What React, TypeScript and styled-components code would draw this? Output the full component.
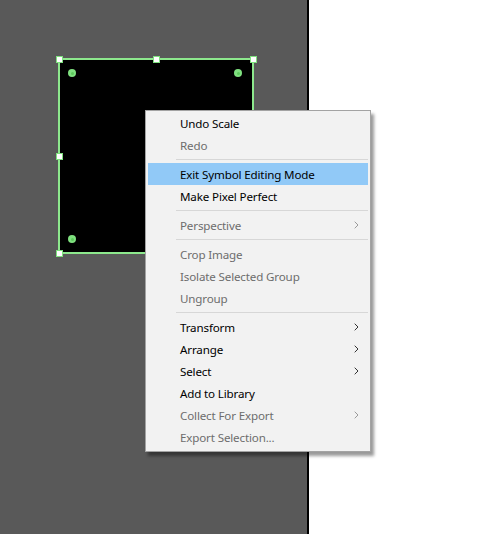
import React from "react";
import styled, { createGlobalStyle } from "styled-components";

const Global = createGlobalStyle`
  html, body { margin: 0; padding: 0; }
  body { width: 504px; height: 534px; overflow: hidden; background: #fff; }
`;

const Page = styled.div`
  position: relative;
  display: flex;
  width: 504px;
  height: 534px;
`;

const Canvas = styled.div`
  position: relative;
  width: 307px;
  height: 534px;
  background: #595959;
`;

const Divider = styled.div`
  width: 2px;
  background: #000;
`;

const Blank = styled.div`
  flex: 1;
  background: #fff;
`;

const Shape = styled.div`
  position: absolute;
  left: 58px;
  top: 58px;
  width: 192px;
  height: 192px;
  background: #000;
  border: 2px solid #8de88d;
`;

const Handle = styled.div<{ $x: number; $y: number }>`
  position: absolute;
  left: ${(p) => p.$x - 3}px;
  top: ${(p) => p.$y - 3}px;
  width: 5px;
  height: 5px;
  background: #fff;
  border: 1px solid #7fe07f;
`;

const Dot = styled.div<{ $x: number; $y: number }>`
  position: absolute;
  left: ${(p) => p.$x - 4}px;
  top: ${(p) => p.$y - 4}px;
  width: 8px;
  height: 8px;
  border-radius: 50%;
  background: #7fe07f;
  display: flex;
  align-items: center;
  justify-content: center;
  &::after {
    content: "";
    width: 3px;
    height: 3px;
    border-radius: 50%;
    background: #5cc95c;
  }
`;

const Menu = styled.div`
  position: absolute;
  left: 145px;
  top: 110px;
  box-sizing: border-box;
  width: 226px;
  padding: 1px 2px 3px 2px;
  background: #f2f2f2;
  border: 1px solid #a3a3a3;
  box-shadow: 3px 4px 3px rgba(0, 0, 0, 0.4);
  font-family: "Noto Sans", "Open Sans", sans-serif;
  font-size: 11.6px;
  display: flex;
  flex-direction: column;
`;

const Item = styled.div<{ $disabled?: boolean; $active?: boolean }>`
  height: 22px;
  display: flex;
  align-items: center;
  padding-left: 32px;
  padding-right: 9px;
  color: ${(p) => (p.$disabled ? "#6d6d6d" : "#000")};
  background: ${(p) => (p.$active ? "#91c9f7" : "transparent")};
  white-space: nowrap;
`;

const Label = styled.span`
  flex: 1;
  letter-spacing: -0.15px;
`;

const Separator = styled.div`
  height: 1px;
  margin: 3px 0 3px 28px;
  background: #d7d7d7;
`;

const Chevron = ({ disabled }: { disabled?: boolean }) => (
  <svg width="5" height="8" viewBox="0 0 5 8">
    <path
      d="M0.7 0.7 L4 4 L0.7 7.3"
      fill="none"
      stroke={disabled ? "#9a9a9a" : "#333"}
      strokeWidth="1"
    />
  </svg>
);

type Entry =
  | { sep: true }
  | { label: string; disabled?: boolean; active?: boolean; sub?: boolean };

const entries: Entry[] = [
  { label: "Undo Scale" },
  { label: "Redo", disabled: true },
  { sep: true },
  { label: "Exit Symbol Editing Mode", active: true },
  { label: "Make Pixel Perfect" },
  { sep: true },
  { label: "Perspective", disabled: true, sub: true },
  { sep: true },
  { label: "Crop Image", disabled: true },
  { label: "Isolate Selected Group", disabled: true },
  { label: "Ungroup", disabled: true },
  { sep: true },
  { label: "Transform", sub: true },
  { label: "Arrange", sub: true },
  { label: "Select", sub: true },
  { label: "Add to Library" },
  { label: "Collect For Export", disabled: true, sub: true },
  { label: "Export Selection...", disabled: true },
];

export default function App() {
  return (
    <>
      <Global />
      <Page>
        <Canvas>
          <Shape />
          <Handle $x={59} $y={59} />
          <Handle $x={156} $y={59} />
          <Handle $x={253} $y={59} />
          <Handle $x={59} $y={156} />
          <Handle $x={59} $y={253} />
          <Handle $x={253} $y={253} />
          <Dot $x={72} $y={73} />
          <Dot $x={238} $y={73} />
          <Dot $x={72} $y={239} />
        </Canvas>
        <Divider />
        <Blank />
        <Menu>
          {entries.map((e, i) =>
            "sep" in e ? (
              <Separator key={i} />
            ) : (
              <Item key={i} $disabled={e.disabled} $active={e.active}>
                <Label>{e.label}</Label>
                {e.sub && <Chevron disabled={e.disabled} />}
              </Item>
            )
          )}
        </Menu>
      </Page>
    </>
  );
}
